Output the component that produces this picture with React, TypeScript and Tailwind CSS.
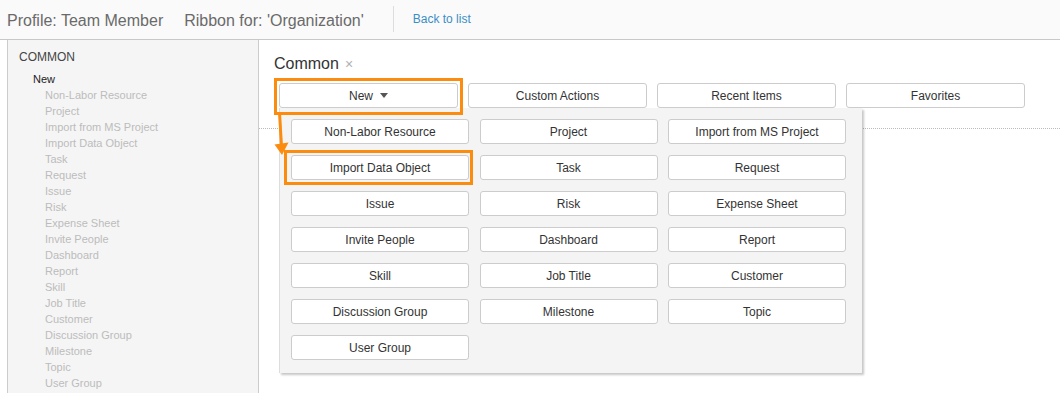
const sideItems = [
  'Non-Labor Resource',
  'Project',
  'Import from MS Project',
  'Import Data Object',
  'Task',
  'Request',
  'Issue',
  'Risk',
  'Expense Sheet',
  'Invite People',
  'Dashboard',
  'Report',
  'Skill',
  'Job Title',
  'Customer',
  'Discussion Group',
  'Milestone',
  'Topic',
  'User Group'
];

// the "New" dropdown shows the same entries as the tree
const menuItems = sideItems;

const tabs = ['Custom Actions', 'Recent Items', 'Favorites'];

const tabBtn =
  'h-[25px] w-[179px] flex items-center justify-center bg-white border border-[#cccccc] rounded-[3px] text-[12px] text-[#333333]';
const menuBtn =
  'h-[25px] w-[178px] flex items-center justify-center bg-white border border-[#cccccc] rounded-[3px] text-[12px] text-[#333333]';

const App = () => {
  return (
    <div
      className="w-[1060px] h-[393px] overflow-hidden bg-white relative"
      style={{ fontFamily: '"Liberation Sans", Arial, sans-serif' }}
    >
      {/* header */}
      <div className="h-[40px] bg-[#fafafa] border-b border-[#c8c8c8] flex items-center pl-[7px]">
        <span className="text-[16px] text-[#6a6a6a] leading-none mt-[2px]">Profile: Team Member</span>
        <span className="text-[16px] text-[#6a6a6a] leading-none ml-[21px] mt-[2px]">
          Ribbon for: 'Organization'
        </span>
        <div className="w-px h-[26px] bg-[#dddddd] ml-[29px] -mt-[2px]" />
        <a href="#" className="text-[12px] text-[#3a8ec6] ml-[19px] -mt-[1px]">
          Back to list
        </a>
      </div>

      <div className="flex h-[353px]">
        {/* left tree */}
        <div className="ml-[7px] w-[252px] h-full bg-[#f5f5f5] border-x border-[#cccccc] pl-[11px] pt-[9px]">
          <div className="text-[12px] leading-[16px] text-[#444444]">COMMON</div>
          <div className="mt-[6px] pl-[14px] text-[11px] leading-[16px]">
            <div className="text-[#222222]">New</div>
            <ul className="pl-[12px] text-[#bcbcbc]">
              {sideItems.map((item) => (
                <li key={item}>{item}</li>
              ))}
            </ul>
          </div>
        </div>

        {/* ribbon editor */}
        <div className="flex-1 relative pl-[15px]">
          <div className="mt-[14px] flex items-center h-[20px]">
            <span className="text-[16px] text-[#333333]">Common</span>
            <span className="ml-[6px] text-[14px] text-[#b0b0b0] leading-none">×</span>
          </div>
          <div className="mt-[9px] ml-[5px] flex gap-[10px]">
            <div className={tabBtn}>
              New
              <svg width="8" height="5" viewBox="0 0 8 5" className="ml-[7px]">
                <path d="M0 0 L8 0 L4 5 Z" fill="#555555" />
              </svg>
            </div>
            {tabs.map((t) => (
              <div key={t} className={tabBtn}>
                {t}
              </div>
            ))}
          </div>
          <div className="mt-[20px] -ml-[15px] border-b border-dotted border-[#bbbbbb]" />

          {/* dropdown */}
          <div className="absolute left-[20px] top-[68px] w-[583px] h-[265px] bg-[#f4f4f4] border-l border-[#dddddd] shadow-[2px_2px_2px_rgba(0,0,0,0.22)] pl-[11px] pt-[11px]">
            <div className="grid grid-cols-[178px_178px_178px] gap-x-[10.5px] gap-y-[11px]">
              {menuItems.map((m) => (
                <div key={m} className={menuBtn}>
                  {m}
                </div>
              ))}
            </div>
            <div className="absolute left-[4px] top-[42px] w-[189px] h-[35px] border-[3px] border-[#fb8c0f]" />
          </div>

          {/* annotation around New */}
          <div className="absolute left-[15px] top-[38px] w-[189px] h-[37px] border-[3px] border-[#fb8c0f]" />
        </div>
      </div>

      {/* annotation arrow */}
      <svg className="absolute left-0 top-0 pointer-events-none" width="1060" height="393">
        <line x1="279.5" y1="113" x2="281.5" y2="146" stroke="#fb8c0f" strokeWidth="3" />
        <polygon points="274.5,144.5 288.5,142.5 282,155" fill="#fb8c0f" />
      </svg>
    </div>
  );
};

export default App;
